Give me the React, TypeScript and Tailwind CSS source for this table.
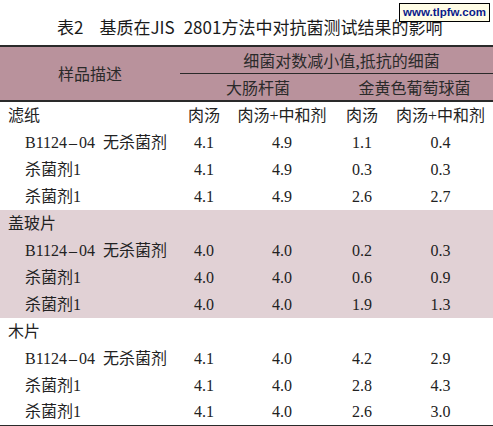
import React from "react";

const serif = { fontFamily: '"Liberation Serif", "Noto Sans CJK SC", serif' };

type Row = { label: string; v: [string, string, string, string] };

const sections: { name: string; bg: string; rows: Row[]; sub?: boolean }[] = [
  {
    name: "滤纸",
    bg: "bg-white",
    sub: true,
    rows: [
      { label: "B", v: ["4.1", "4.9", "1.1", "0.4"] },
      { label: "杀菌剂1", v: ["4.1", "4.9", "0.3", "0.3"] },
      { label: "杀菌剂1", v: ["4.1", "4.9", "2.6", "2.7"] },
    ],
  },
  {
    name: "盖玻片",
    bg: "bg-[#e1d1d5]",
    rows: [
      { label: "B", v: ["4.0", "4.0", "0.2", "0.3"] },
      { label: "杀菌剂1", v: ["4.0", "4.0", "0.6", "0.9"] },
      { label: "杀菌剂1", v: ["4.0", "4.0", "1.9", "1.3"] },
    ],
  },
  {
    name: "木片",
    bg: "bg-white",
    rows: [
      { label: "B", v: ["4.1", "4.0", "4.2", "2.9"] },
      { label: "杀菌剂1", v: ["4.1", "4.0", "2.8", "4.3"] },
      { label: "杀菌剂1", v: ["4.1", "4.0", "2.6", "3.0"] },
    ],
  },
];

const grid = "grid grid-cols-[180px_48px_108px_52px_105px]";

function Label({ label }: { label: string }) {
  if (label === "B") {
    return (
      <div className="pl-[25px] whitespace-pre">
        B1124<span className="mx-[2px]">–</span>04  无杀菌剂
      </div>
    );
  }
  return <div className="pl-[25px] whitespace-pre">{label}</div>;
}

export default function App() {
  return (
    <div className="relative w-[493px] h-[426px] bg-white text-[#222] overflow-hidden">
      <div
        className="h-[45px] flex items-start pt-[16px] pl-[57px] text-[17px] leading-[22px] text-[#1a1a1a] whitespace-nowrap"
        style={{ fontFamily: '"Noto Sans CJK SC", "Liberation Sans", sans-serif' }}
      >
        <span>表2</span>
        <span className="ml-[16px]">基质在JIS</span>
        <span className="ml-[9px]">2801方法中对抗菌测试结果的影响</span>
      </div>
      <div className="absolute left-[399px] top-[3px] w-[91px] h-[19px] border border-black bg-[#fffde6] flex items-center justify-center">
        <span
          className="text-[11.5px] font-bold text-[#0a1a8a] leading-none"
          style={{ fontFamily: '"Liberation Sans", sans-serif' }}
        >
          www.tlpfw.com
        </span>
      </div>

      {/* table */}
      <div className="border-t-2 border-[#2a2a2a]">
        <div
          className={`${grid} bg-[#b9929c] text-[#2a2a2a] text-[16px] border-b-2 border-[#2a2a2a]`}
          style={{ fontFamily: '"Noto Sans CJK SC", sans-serif' }}
        >
          <div className="row-span-2 flex items-center justify-center pb-[2px]">样品描述</div>
          <div className="col-span-4 h-[27px] flex items-center justify-center pl-[10px] border-b border-[#2a2a2a]">
            细菌对数减小值,抵抗的细菌
          </div>
          <div className="col-span-2 h-[26px] flex items-center justify-center">大肠杆菌</div>
          <div className="col-span-2 h-[26px] flex items-center justify-center">金黄色葡萄球菌</div>
        </div>

        {sections.map((s, si) => (
          <div key={si} className={`${s.bg} ${si === 2 ? "border-b-2 border-[#2a2a2a]" : ""}`}>
            <div className={`${grid} h-[27px] items-center text-[16px]`} style={serif}>
              <div className="pl-[8px]">{s.name}</div>
              {s.sub ? (
                <>
                  <div className="text-center">肉汤</div>
                  <div className="text-center">肉汤+中和剂</div>
                  <div className="text-center">肉汤</div>
                  <div className="text-center">肉汤+中和剂</div>
                </>
              ) : null}
            </div>
            {s.rows.map((r, ri) => (
              <div
                key={ri}
                className={`${grid} ${si === 2 && ri === 2 ? "h-[26px]" : "h-[27px]"} items-center text-[16px]`}
                style={serif}
              >
                <Label label={r.label} />
                {r.v.map((v, vi) => (
                  <div key={vi} className="text-center">
                    {v}
                  </div>
                ))}
              </div>
            ))}
          </div>
        ))}
      </div>
    </div>
  );
}
